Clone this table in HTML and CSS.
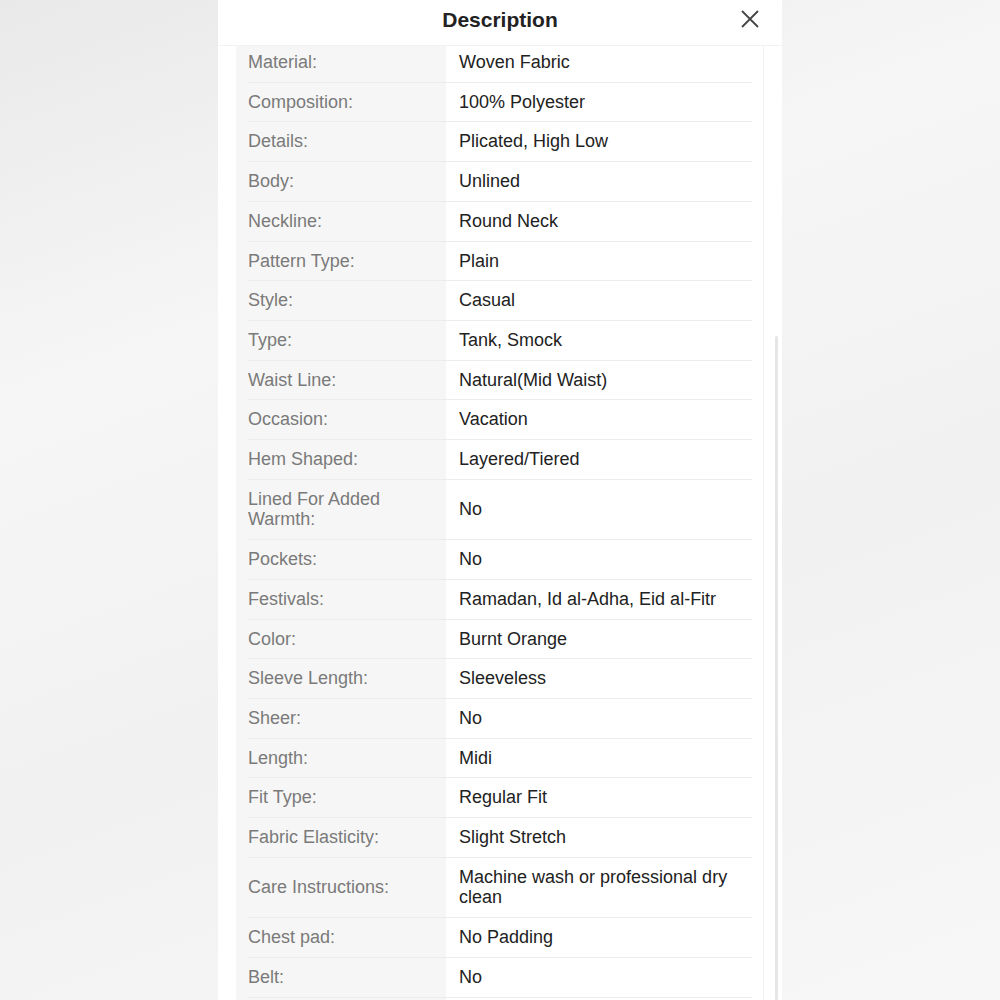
FILE: index.html
```html
<!DOCTYPE html>
<html>
<head>
    <title>Description</title>
    <link rel="stylesheet" href="styles.css">
</head>
<body>
    <div class="sheet">
        <div class="sheet-header">
            <h2>Description</h2>
            <button class="close" aria-label="Close">
                <svg width="18" height="18" viewBox="0 0 18 18">
                    <path d="M1 1 L17 17 M17 1 L1 17" stroke="#444" stroke-width="1.8" fill="none"/>
                </svg>
            </button>
        </div>
        <div class="sheet-body">
            <div class="attr-list">
                <div class="attr"><div class="key">Material:</div><div class="val">Woven Fabric</div></div>
                <div class="attr"><div class="key">Composition:</div><div class="val">100% Polyester</div></div>
                <div class="attr"><div class="key">Details:</div><div class="val">Plicated, High Low</div></div>
                <div class="attr"><div class="key">Body:</div><div class="val">Unlined</div></div>
                <div class="attr"><div class="key">Neckline:</div><div class="val">Round Neck</div></div>
                <div class="attr"><div class="key">Pattern Type:</div><div class="val">Plain</div></div>
                <div class="attr"><div class="key">Style:</div><div class="val">Casual</div></div>
                <div class="attr"><div class="key">Type:</div><div class="val">Tank, Smock</div></div>
                <div class="attr"><div class="key">Waist Line:</div><div class="val">Natural(Mid Waist)</div></div>
                <div class="attr"><div class="key">Occasion:</div><div class="val">Vacation</div></div>
                <div class="attr"><div class="key">Hem Shaped:</div><div class="val">Layered/Tiered</div></div>
                <div class="attr"><div class="key">Lined For Added Warmth:</div><div class="val">No</div></div>
                <div class="attr"><div class="key">Pockets:</div><div class="val">No</div></div>
                <div class="attr"><div class="key">Festivals:</div><div class="val">Ramadan, Id al-Adha, Eid al-Fitr</div></div>
                <div class="attr"><div class="key">Color:</div><div class="val">Burnt Orange</div></div>
                <div class="attr"><div class="key">Sleeve Length:</div><div class="val">Sleeveless</div></div>
                <div class="attr"><div class="key">Sheer:</div><div class="val">No</div></div>
                <div class="attr"><div class="key">Length:</div><div class="val">Midi</div></div>
                <div class="attr"><div class="key">Fit Type:</div><div class="val">Regular Fit</div></div>
                <div class="attr"><div class="key">Fabric Elasticity:</div><div class="val">Slight Stretch</div></div>
                <div class="attr"><div class="key">Care Instructions:</div><div class="val">Machine wash or professional dry clean</div></div>
                <div class="attr"><div class="key">Chest pad:</div><div class="val">No Padding</div></div>
                <div class="attr"><div class="key">Belt:</div><div class="val">No</div></div>
            </div>
            <div class="scroll-thumb"></div>
        </div>
    </div>
</body>
</html>
```

FILE: styles.css
```css
:root {
    --key-bg: #f6f6f6;
    --line-color: #ececec;
    --key-color: #7a7a7a;
    --val-color: #222222;
}

body {
    font-family: 'Liberation Sans', Arial, Helvetica, sans-serif;
    margin: 0;
    height: 1000px;
    overflow: hidden;
    background: linear-gradient(160deg, #e9e9e9 0%, #f6f6f6 30%, #f1f1f1 60%, #f7f7f7 100%);
}

.sheet {
    width: 564px;
    height: 1000px;
    margin: 0 auto;
    background-color: #FFF;
    display: flex;
    flex-direction: column;
    border-radius: 6px 6px 0 0;
}

.sheet-header {
    height: 45px;
    flex: none;
    display: flex;
    align-items: center;
    justify-content: center;
    border-bottom: 1px solid #f2f2f2;
    position: relative;
    z-index: 2;
    background-color: #FFF;
}

.sheet-header h2 {
    margin: 0;
    font-size: 21px;
    font-weight: bold;
    color: #222;
    padding-bottom: 5px;
}

.close {
    position: absolute;
    right: 23px;
    top: 10px;
    border: none;
    background: none;
    padding: 0;
    width: 18px;
    height: 18px;
    cursor: pointer;
}

.close svg {
    display: block;
}

.sheet-body {
    flex: 1;
    overflow: hidden;
    padding: 0 18px;
    position: relative;
}

.attr-list {
    margin-top: -3px;
    border-right: 1px solid #f0f0f0;
    background: linear-gradient(to right, var(--key-bg) 210px, #FFF 210px);
    padding-bottom: 20px;
}

.attr {
    display: grid;
    grid-template-columns: 198px 1fr;
    margin: 0 11px 0 12px;
    border-bottom: 1px solid var(--line-color);
    font-size: 18px;
    line-height: 20.7px;
}

.key {
    color: var(--key-color);
    padding: 9px 8px 9px 0;
    display: flex;
    align-items: center;
}

.val {
    color: var(--val-color);
    padding: 9px 0 9px 13px;
    display: flex;
    align-items: center;
}

.scroll-thumb {
    position: absolute;
    right: 4px;
    top: 290px;
    bottom: 0;
    width: 3px;
    border-radius: 2px;
    background-color: #e6e6e6;
}
```
